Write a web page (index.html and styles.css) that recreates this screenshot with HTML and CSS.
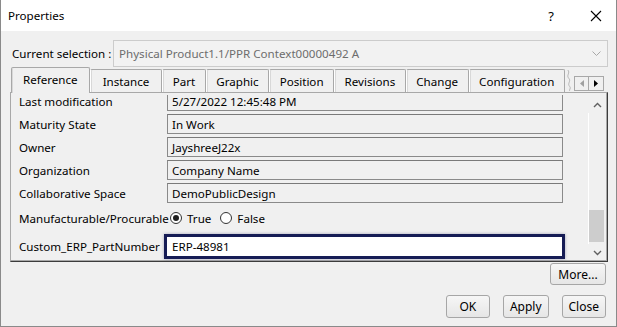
FILE: index.html
```html
<!DOCTYPE html>
<html lang="en">
<head>
  <meta charset="UTF-8">
  <title>Properties</title>
  <link rel="stylesheet" href="styles.css">
</head>
<body>
  <div class="window">
    <div class="titlebar">
      <span class="title">Properties</span>
      <span class="help">?</span>
      <span class="close">
        <svg width="12" height="12" viewBox="0 0 12 12"><path d="M1 1 L11 11 M11 1 L1 11" stroke="#000" stroke-width="1.1" fill="none"/></svg>
      </span>
    </div>

    <div class="content">
      <div class="selection-row">
        <span class="selection-label">Current selection :</span>
        <div class="combo">
          <span class="combo-text">Physical Product1.1/PPR Context00000492 A</span>
          <svg class="combo-arrow" width="9" height="6" viewBox="0 0 9 6"><path d="M0.5 0.5 L4.5 4.5 L8.5 0.5" stroke="#a8a8a8" fill="none"/></svg>
        </div>
      </div>

      <div class="tabs">
        <div class="tab tab-active">Reference</div>
        <div class="tab tab-wide">Instance</div>
        <div class="tab">Part</div>
        <div class="tab">Graphic</div>
        <div class="tab">Position</div>
        <div class="tab">Revisions</div>
        <div class="tab">Change</div>
        <div class="tab">Configuration</div>
        <svg class="tab-cut" width="9" height="23" viewBox="0 0 9 23"><path d="M2 0 C5 3 0 6 3 9 C6 12 1 15 4 18 C6 20 3 22 4 23" stroke="#b0b0b0" fill="none"/></svg>
        <div class="tab-scroll">
          <span class="tab-scroll-btn"><svg width="4" height="7" viewBox="0 0 4 7"><path d="M4 0 L0 3.5 L4 7 Z" fill="#a0a0a0"/></svg></span>
          <span class="tab-scroll-btn"><svg width="4" height="7" viewBox="0 0 4 7"><path d="M0 0 L4 3.5 L0 7 Z" fill="#000"/></svg></span>
        </div>
      </div>

      <div class="panel">
        <div class="viewport">
          <div class="rows">
            <div class="row">
              <span class="row-label">Last modification</span>
              <div class="field">5/27/2022 12:45:48 PM</div>
            </div>
            <div class="row">
              <span class="row-label">Maturity State</span>
              <div class="field">In Work</div>
            </div>
            <div class="row">
              <span class="row-label">Owner</span>
              <div class="field">JayshreeJ22x</div>
            </div>
            <div class="row">
              <span class="row-label">Organization</span>
              <div class="field">Company Name</div>
            </div>
            <div class="row">
              <span class="row-label">Collaborative Space</span>
              <div class="field">DemoPublicDesign</div>
            </div>
            <div class="row row-radio">
              <span class="row-label">Manufacturable/Procurable</span>
              <div class="radios">
                <span class="radio radio-on"></span><span class="radio-text">True</span>
                <span class="radio"></span><span class="radio-text">False</span>
              </div>
            </div>
            <div class="row row-edit">
              <span class="row-label">Custom_ERP_PartNumber</span>
              <div class="field field-edit">ERP-48981</div>
            </div>
          </div>
        </div>
        <div class="scrollbar">
          <span class="scroll-arrow"><svg width="9" height="6" viewBox="0 0 9 6"><path d="M1 5 L4.5 1.5 L8 5" stroke="#606060" stroke-width="1.4" fill="none"/></svg></span>
          <div class="scroll-track"><div class="scroll-thumb"></div></div>
          <span class="scroll-arrow"><svg width="9" height="6" viewBox="0 0 9 6"><path d="M1 1 L4.5 4.5 L8 1" stroke="#606060" stroke-width="1.4" fill="none"/></svg></span>
        </div>
      </div>

      <div class="more-row">
        <button class="btn btn-more">More...</button>
      </div>

      <div class="button-row">
        <button class="btn">OK</button>
        <button class="btn">Apply</button>
        <button class="btn">Close</button>
      </div>
    </div>
  </div>
</body>
</html>
```

FILE: styles.css
```css
* {
  box-sizing: border-box;
}

body {
  margin: 0;
  font-family: "Noto Sans", "Open Sans", sans-serif;
  font-size: 11.6px;
  color: #000;
  background: #fff;
}

.window {
  width: 617px;
  height: 327px;
  border: 1px solid #8a8a8a;
  border-top: none;
  background: #f0f0f0;
  display: flex;
  flex-direction: column;
  overflow: hidden;
}

.titlebar {
  height: 31px;
  background: #fff;
  display: flex;
  align-items: center;
  padding-left: 7px;
  flex-shrink: 0;
}

.title {
  flex: 1;
}

.help {
  font-size: 13px;
  margin-right: 36px;
}

.close {
  display: flex;
  margin-right: 14px;
}

.content {
  flex: 1;
  display: flex;
  flex-direction: column;
  padding: 9px 8px 0 9px;
}

.selection-row {
  height: 27px;
  display: flex;
  align-items: center;
}

.selection-label {
  width: 103px;
  flex-shrink: 0;
  padding-left: 2px;
  white-space: nowrap;
}

.combo {
  flex: 1;
  height: 27px;
  display: flex;
  align-items: center;
  border: 1px solid #cccccc;
  background: #f2f2f2;
  padding: 0 6px 0 5px;
}

.combo-text {
  flex: 1;
  color: #6d6d6d;
}

.tabs {
  height: 26px;
  display: flex;
  align-items: flex-end;
  padding-left: 1px;
  margin-bottom: -1px;
  position: relative;
  z-index: 1;
}

.tab {
  height: 23px;
  padding: 0 9.5px;
  display: flex;
  align-items: center;
  border: 1px solid #a8a8a8;
  border-bottom: none;
  border-left-color: #ffffff;
  box-shadow: inset 1px 0 0 #d8d8d8;
  border-radius: 2px 2px 0 0;
  background: #f0f0f0;
  margin-bottom: 1px;
  white-space: nowrap;
}

.tab-wide {
  padding: 0 12px;
}

.tab-active {
  height: 26px;
  margin-bottom: 0;
  padding: 0 11px 3px;
  border-left-color: #a8a8a8;
}

.tab-cut {
  margin-left: 1px;
  margin-bottom: 1px;
}

.tab-scroll {
  margin-left: auto;
  margin-right: 4px;
  margin-bottom: 2px;
  display: flex;
}

.tab-scroll-btn {
  width: 15px;
  height: 15px;
  border: 1px solid #a8a8a8;
  background: #f0f0f0;
  display: flex;
  align-items: center;
  justify-content: center;
}

.tab-scroll-btn + .tab-scroll-btn {
  border-left: none;
}

.panel {
  height: 170px;
  display: flex;
  border: 1px solid #a8a8a8;
  border-right-color: #3c3c3c;
  border-bottom-color: #3c3c3c;
  box-shadow: inset -1px -1px 0 #a8a8a8;
}

.viewport {
  flex: 1;
  overflow: hidden;
  margin-top: 2px;
}

.rows {
  margin-top: -4px;
  display: flex;
  flex-direction: column;
  gap: 3px;
}

.row {
  height: 20px;
  display: flex;
  align-items: center;
  padding-left: 8px;
}

.row-label {
  width: 148px;
  flex-shrink: 0;
  white-space: nowrap;
}

.field {
  width: 396px;
  height: 20px;
  border: 1px solid #8a8a8a;
  border-top-color: #7a7a7a;
  padding-left: 4px;
  display: flex;
  align-items: center;
}

.row-radio {
  height: 22px;
  margin-top: 1px;
}

.radios {
  display: flex;
  align-items: center;
  padding-left: 3px;
}

.radio {
  width: 12px;
  height: 12px;
  border: 1px solid #333;
  border-radius: 50%;
  background: #fff;
  display: flex;
  align-items: center;
  justify-content: center;
}

.radio-on::after {
  content: "";
  width: 6px;
  height: 6px;
  border-radius: 50%;
  background: #1f1f1f;
}

.radio-text {
  margin-left: 5px;
  margin-right: 9px;
}

.row-edit {
  height: 25px;
  margin-top: 2px;
}

.field-edit {
  margin-left: -3px;
  width: 401px;
  height: 25px;
  border: 3px solid #161c55;
  background: #fff;
  padding-left: 5px;
  box-shadow: 0 0 3px rgba(22, 28, 85, 0.35);
}

.scrollbar {
  width: 19px;
  display: flex;
  flex-direction: column;
  padding-right: 1px;
}

.scroll-arrow {
  height: 17px;
  display: flex;
  align-items: center;
  justify-content: center;
}

.scroll-arrow:first-child {
  margin-top: 3px;
}

.scroll-track {
  flex: 1;
  display: flex;
  flex-direction: column;
  justify-content: flex-end;
  padding-bottom: 2px;
  border-left: 1px solid #ffffff;
}

.scroll-thumb {
  height: 32px;
  width: 15px;
  background: #cdcdcd;
}

.more-row {
  display: flex;
  justify-content: flex-end;
  padding-right: 2px;
  margin-top: 1px;
}

.button-row {
  display: flex;
  justify-content: flex-end;
  gap: 13px;
  padding-right: 2px;
  margin-top: 10px;
}

.btn {
  font-family: "Noto Sans", "Open Sans", sans-serif;
  font-size: 12px;
  color: #000;
  height: 23px;
  min-width: 44px;
  padding: 0 6px;
  border: 1px solid #a6a6a6;
  border-radius: 3px;
  background: linear-gradient(#f6f6f6, #e6e6e6);
}

.btn-more {
  height: 22px;
  width: 56px;
}
```
